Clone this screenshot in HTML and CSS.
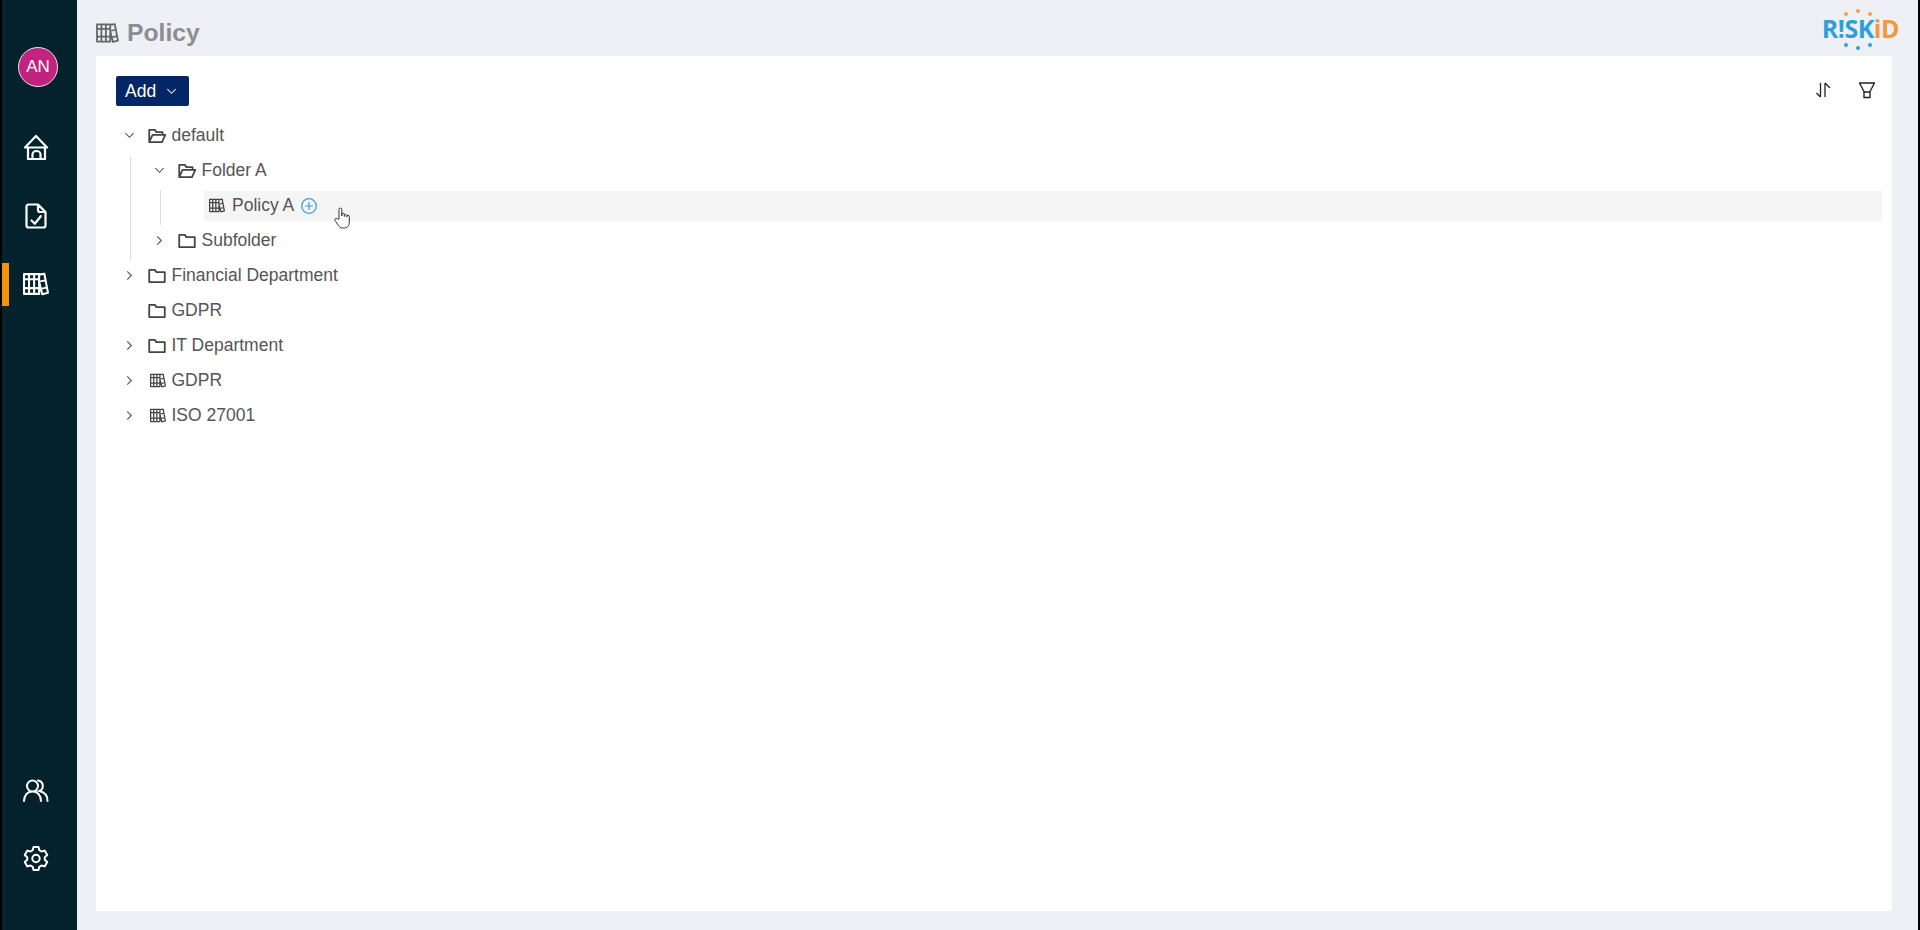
FILE: index.html
```html
<!DOCTYPE html>
<html lang="en">
<head>
<meta charset="utf-8">
<title>Policy</title>
<link rel="stylesheet" href="styles.css">
</head>
<body>
<svg class="defs" width="0" height="0" aria-hidden="true">
  <defs>
    <symbol id="books" viewBox="0 0 25 22">
      <path d="M1 1.500h14.500v19H1zM1 6.500h14.500M1 15h14.500M5.800 1.500v19M10.700 1.500v19M15.500 2l5-.8L24 19.500l-5.500 1.300-3-12" fill="none" stroke="currentColor" stroke-width="2" stroke-linejoin="round"/>
      <path d="M16.500 8.500l5-1M18 15.500l4.500-1" fill="none" stroke="currentColor" stroke-width="1.800"/>
    </symbol>
    <symbol id="folder" viewBox="0 0 18 18">
      <path d="M2 14.500V3.500h5l1.500 2H16v9z" fill="none" stroke="currentColor" stroke-width="1.600" stroke-linejoin="round"/>
    </symbol>
    <symbol id="folder-open" viewBox="0 0 18 18">
      <path d="M2 14.500V3.500h5l1.500 2H14v2.500M2 14.500h11.500L16.500 8H5L2 14.500z" fill="none" stroke="currentColor" stroke-width="1.600" stroke-linejoin="round"/>
    </symbol>
    <symbol id="down" viewBox="0 0 12 12">
      <path d="M1.500 3.500L6 8l4.500-4.500" fill="none" stroke="currentColor" stroke-width="1.200"/>
    </symbol>
    <symbol id="right" viewBox="0 0 12 12">
      <path d="M3.500 1.500L8 6l-4.500 4.500" fill="none" stroke="currentColor" stroke-width="1.200"/>
    </symbol>
  </defs>
</svg>
<div class="app">
  <nav class="sidebar">
    <div class="avatar">AN</div>
    <a class="nav-item">
      <svg class="nav-icon" viewBox="0 0 26 26"><path d="M2 13.500L13 2l11 11.500zM5 13.500V25h17V13.500M9.500 25v-4.500a4 3.500 0 0 1 8 0V25" fill="none" stroke="currentColor" stroke-width="2.200" stroke-linejoin="round" stroke-linecap="round"/></svg>
    </a>
    <a class="nav-item">
      <svg class="nav-icon" viewBox="0 0 26 26"><path d="M3.500 3.500a2 2 0 0 1 2-2h9.500l7.500 7.500v13.500a2 2 0 0 1-2 2h-15a2 2 0 0 1-2-2zM15 1.500V7a2 2 0 0 0 2 2h5.500M8.500 17.500l3.300 3.300 6-7.600" fill="none" stroke="currentColor" stroke-width="2.200" stroke-linejoin="round" stroke-linecap="round"/></svg>
    </a>
    <a class="nav-item nav-item-active">
      <svg class="nav-icon nav-icon-books"><use href="#books"/></svg>
    </a>
    <div class="sidebar-spacer"></div>
    <a class="nav-item">
      <svg class="nav-icon nav-icon-users" viewBox="0 0 28 26"><path d="M2 24c0-5.500 3.500-9.500 8.500-9.500s8.500 4 8.500 9.500M10.500 14.500a5.500 5.500 0 1 0 0-11 5.500 5.500 0 0 0 0 11zM16 3.500a5.500 5.500 0 0 1 1.500 10.500c4.500 1 8 4.500 8 10" fill="none" stroke="currentColor" stroke-width="2" stroke-linecap="round"/></svg>
    </a>
    <a class="nav-item">
      <svg class="nav-icon" viewBox="0 0 26 26"><path d="M10.500 2h5l.8 3.200 2.200 1.300 3.200-.9 2.500 4.400-2.400 2.300v2.400l2.400 2.300-2.500 4.400-3.200-.9-2.200 1.300-.8 3.200h-5l-.8-3.200-2.200-1.300-3.200.9L1.800 17l2.400-2.300v-2.400L1.800 10l2.500-4.400 3.200.9 2.200-1.300z" fill="none" stroke="currentColor" stroke-width="2" stroke-linejoin="round"/><circle cx="13" cy="13.500" r="3.700" fill="none" stroke="currentColor" stroke-width="2"/></svg>
    </a>
  </nav>
  <main class="main">
    <header class="topbar">
      <svg class="title-icon"><use href="#books"/></svg>
      <h1 class="title">Policy</h1>
      <div class="logo">
        <svg class="logo-dots" viewBox="0 0 76 44">
          <circle cx="24" cy="7" r="2" fill="#f0a04b"/><circle cx="36" cy="4" r="2" fill="#f0a04b"/><circle cx="48" cy="7" r="2" fill="#f0a04b"/>
          <circle cx="24" cy="38" r="2" fill="#2f9fdc"/><circle cx="36" cy="41" r="2" fill="#2f9fdc"/><circle cx="48" cy="38" r="2" fill="#2f9fdc"/>
        </svg>
        <span class="logo-blue">R!SK</span><span class="logo-orange">iD</span>
      </div>
    </header>
    <section class="panel">
      <div class="toolbar">
        <button class="add-btn">Add <svg class="add-caret"><use href="#down"/></svg></button>
        <div class="tools">
          <svg class="tool-icon" viewBox="0 0 18 18"><path d="M6.500 2v14M6.500 16L2.500 12M11 16V2M11 2l5 5" fill="none" stroke="currentColor" stroke-width="1.300"/></svg>
          <svg class="tool-icon" viewBox="0 0 18 18"><path d="M1.500 2h15L12 10.500v6H6v-6zM6 11h6" fill="none" stroke="currentColor" stroke-width="1.400" stroke-linejoin="round"/></svg>
        </div>
      </div>
      <div class="tree">
        <div class="row"><svg class="sw"><use href="#down"/></svg><svg class="ic"><use href="#folder-open"/></svg><span class="lbl">default</span></div>
        <div class="children">
          <div class="row"><svg class="sw"><use href="#down"/></svg><svg class="ic"><use href="#folder-open"/></svg><span class="lbl">Folder A</span></div>
          <div class="children children-inner">
            <div class="row row-hover"><span class="sw-empty"></span><span class="hover-bar"><svg class="ic ic-book"><use href="#books"/></svg><span class="lbl">Policy A</span><svg class="plus" viewBox="0 0 18 18"><circle cx="9" cy="9" r="7.300" fill="none" stroke="currentColor" stroke-width="1.300"/><path d="M9 5v8M5 9h8" stroke="currentColor" stroke-width="1.200"/></svg></span></div>
          </div>
          <div class="row"><svg class="sw"><use href="#right"/></svg><svg class="ic"><use href="#folder"/></svg><span class="lbl">Subfolder</span></div>
        </div>
        <div class="row"><svg class="sw"><use href="#right"/></svg><svg class="ic"><use href="#folder"/></svg><span class="lbl">Financial Department</span></div>
        <div class="row"><span class="sw-empty"></span><svg class="ic"><use href="#folder"/></svg><span class="lbl">GDPR</span></div>
        <div class="row"><svg class="sw"><use href="#right"/></svg><svg class="ic"><use href="#folder"/></svg><span class="lbl">IT Department</span></div>
        <div class="row"><svg class="sw"><use href="#right"/></svg><svg class="ic ic-book"><use href="#books"/></svg><span class="lbl">GDPR</span></div>
        <div class="row"><svg class="sw"><use href="#right"/></svg><svg class="ic ic-book"><use href="#books"/></svg><span class="lbl">ISO 27001</span></div>
      </div>
      <svg class="cursor" viewBox="0 0 18 24"><path d="M6 13V3.500a1.400 1.400 0 0 1 2.800 0V10V8.500a1.300 1.300 0 0 1 2.600 0V10.500V9.500a1.300 1.300 0 0 1 2.500 0V11v-.5a1.200 1.200 0 0 1 2.400 0V16c0 3.500-2 6-5 6H9.500c-2 0-3-1-4-2.500L2 14.500c-1-1.500 1-3 2.500-1.500z" fill="#fff" stroke="#333" stroke-width="1" stroke-linejoin="round"/></svg>
    </section>
  </main>
</div>
</body>
</html>
```
FILE: styles.css
```css
* { box-sizing: border-box; }
html, body { margin: 0; height: 100%; overflow: hidden; }
body { background: #000; font-family: "Liberation Sans", Arial, sans-serif; }
.defs { position: absolute; }
.app { display: flex; height: 930px; margin: 0 2px; background: #eff0f5; }

.sidebar {
  width: 75px;
  flex: none;
  background: #03222b;
  color: #fff;
  display: flex;
  flex-direction: column;
  padding: 47px 0 23.500px;
}
.avatar {
  width: 40px;
  height: 40px;
  margin-left: 16px;
  margin-bottom: 40px;
  border-radius: 50%;
  border: 1px solid #e9e3e8;
  background: #c2237f;
  font-size: 17px;
  line-height: 38px;
  text-align: center;
}
.nav-item {
  height: 40px;
  margin-bottom: 28.500px;
  display: flex;
  align-items: center;
  padding-left: 21px;
  flex: none;
}
.nav-item-active {
  height: 43px;
  margin-top: -1.500px;
  margin-bottom: 27px;
  border-left: 7px solid #f7920f;
  padding-left: 14px;
}
.nav-icon { width: 26px; height: 26px; }
.nav-icon-users { width: 28px; margin-left: -1px; }
.sidebar-spacer { flex: 1; }

.main { flex: 1; min-width: 0; display: flex; flex-direction: column; padding: 0 26px 19px 19px; }
.topbar { height: 56px; display: flex; align-items: center; color: #8a8d92; position: relative; padding-top: 12px; }
.title-icon { width: 23px; height: 20px; margin-right: 8px; color: #666; margin-top: -2px; flex: none; }
.title { margin: -2px 0 0; font-size: 24.700px; font-weight: 700; }
.logo { margin-left: auto; margin-right: -7px; position: relative; font-family: "Open Sans", sans-serif; font-weight: 700; font-size: 25px; letter-spacing: -0.500px; line-height: 1; margin-top: -12px; }
.logo-blue { color: #2f9fdc; }
.logo-orange { color: #f0993f; }
.logo-dots { position: absolute; left: 0; top: -9px; width: 76px; height: 44px; }

.panel { flex: 1; background: #fff; position: relative; padding: 20px 10px 0 20px; }
.toolbar { display: flex; justify-content: space-between; align-items: center; height: 30px; margin-bottom: 12px; }
.add-btn {
  width: 73px;
  height: 30px;
  border: 0;
  border-radius: 2px;
  background: #032666;
  color: #fff;
  font: 17.500px "Liberation Sans", Arial, sans-serif;
  padding: 0 0 0 9px;
  display: flex;
  align-items: center;
  gap: 10px;
}
.add-caret { width: 11px; height: 11px; color: #dfe6f2; flex: none; }
.tools { display: flex; gap: 26px; color: #222; margin-right: 6px; margin-top: -2px; }
.tool-icon { width: 18px; height: 18px; }

.tree { color: #555; font-size: 17.500px; }
.row { height: 35px; display: flex; align-items: center; padding-left: 9px; }
.sw { width: 11px; height: 11px; flex: none; color: #555; margin-left: -1px; margin-right: 12px; }
.sw-empty { width: 22px; flex: none; }
.ic { width: 20px; height: 20px; color: #444; flex: none; margin-right: 4.500px; }
.ic-book { width: 16px; height: 15px; margin-left: 3px; margin-right: 5.500px; }
.lbl { white-space: nowrap; }
.children { margin-left: 14px; padding-left: 16px; position: relative; }
.children::before { content: ""; position: absolute; left: 0; top: 4px; bottom: -2px; width: 1px; background: #dcdcdc; }
.children-inner { margin-left: 14px; height: 35px; }
.children-inner::before { top: 2px; bottom: -2px; }
.row-hover { padding-left: 0; }
.row-hover .sw-empty { width: 28px; }
.hover-bar { flex: 1; height: 30px; background: #f5f5f5; display: flex; align-items: center; padding-left: 2px; }
.hover-bar .ic-book { margin-right: 7px; }
.plus { width: 18px; height: 18px; color: #3f9ae2; margin-left: 6px; }
.cursor { position: absolute; left: 237px; top: 150px; width: 18px; height: 24px; }
```
